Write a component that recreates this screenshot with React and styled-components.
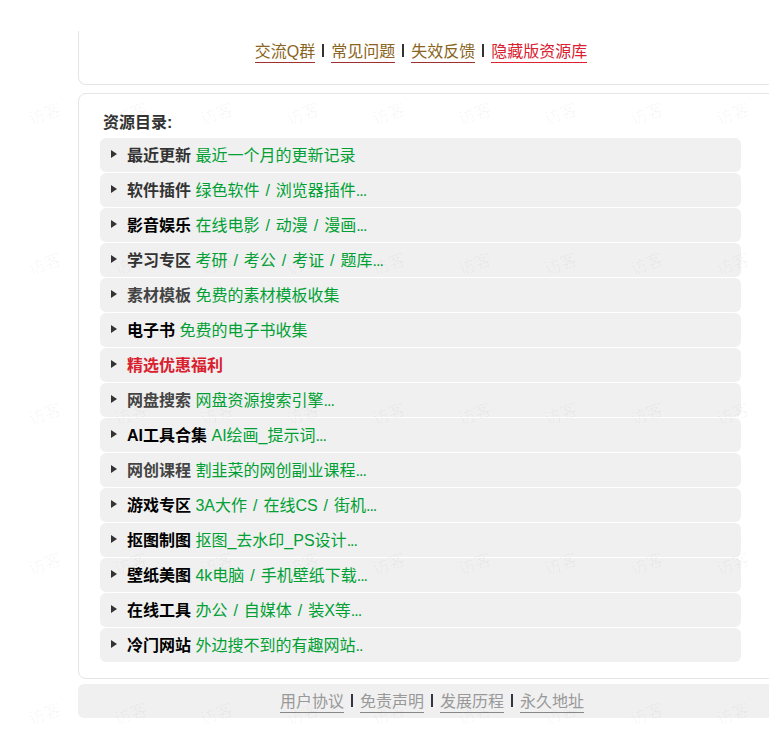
import React from "react";
import styled, { createGlobalStyle } from "styled-components";

const Global = createGlobalStyle`
  html, body { margin: 0; padding: 0; background: #fff; overflow: hidden; }
  body { font-family: "Liberation Sans", "Noto Sans CJK SC", sans-serif; font-size: 16px; color: #333; }
`;

const Page = styled.div`
  position: relative;
  width: 769px;
  height: 738px;
  overflow: hidden;
  padding: 31px 0 0 78px;
  box-sizing: border-box;
`;

const Card = styled.section`
  width: 760px;
  box-sizing: border-box;
  background: #fff;
  border: 1px solid #e5e5e5;
  border-radius: 8px;
`;

const TopCard = styled(Card)`
  height: 54px;
  border-top: 0;
  border-top-left-radius: 0;
  border-top-right-radius: 0;
  padding: 8px 74px 0 0;
  margin-bottom: 8px;
`;

const LinkRow = styled.nav`
  display: flex;
  justify-content: center;
  align-items: center;
  height: 26px;
  line-height: 26px;
`;

const Link = styled.a`
  color: ${(p) => p.$color};
  text-decoration: none;
  border-bottom: 1px solid ${(p) => p.$line};
  line-height: 20px;
`;

const Sep = styled.span`
  display: block;
  width: 2px;
  height: 13px;
  margin: -3px 7px 0;
  background: ${(p) => p.$color};
`;

const MainCard = styled(Card)`
  height: 586px;
  padding: 17px 0 0 21px;
`;

const Heading = styled.h2`
  margin: 0 0 3px 3px;
  height: 24px;
  font-size: 16px;
  line-height: 24px;
  font-weight: 700;
  color: #333;
`;

const List = styled.div`
  display: flex;
  flex-direction: column;
  gap: 1px;
  width: 641px;
`;

const Row = styled.details`
  height: 34px;
  background: #f0f0f0;
  border-radius: 6px;
`;

const Summary = styled.summary`
  display: flex;
  align-items: center;
  height: 34px;
  line-height: 34px;
  padding-left: 11px;
  white-space: pre;
  cursor: pointer;
  list-style: none;

  &::-webkit-details-marker { display: none; }

  &::before {
    content: "";
    flex: none;
    width: 0;
    height: 0;
    margin: -2px 10px 0 0;
    border-style: solid;
    border-width: 4.5px 0 4.5px 6px;
    border-color: transparent transparent transparent #333;
  }
`;

const Label = styled.span`
  display: block;
  margin-top: 2px;
`;

const Title = styled.b`
  font-weight: 700;
  color: ${(p) => p.$color || "#333"};
`;

const Desc = styled.span`
  color: #00a034;
  word-spacing: 1.5px;
`;

const Dots = styled.span`
  letter-spacing: -1px;
`;

const FooterBar = styled.footer`
  width: 760px;
  height: 34px;
  margin-top: 5px;
  padding: 2px 52px 0 0;
  box-sizing: border-box;
  background: #f0f0f0;
  border-radius: 6px;
  display: flex;
  justify-content: center;
  align-items: center;
`;

const Watermarks = styled.div`
  position: absolute;
  inset: 0;
  pointer-events: none;
  display: grid;
  grid-template-columns: repeat(9, 86px);
  grid-auto-rows: 150px;
  padding: 40px 0 0 2px;
  z-index: 5;
`;

const Mark = styled.span`
  display: block;
  text-align: center;
  line-height: 150px;
  height: 150px;
  font-size: 17px;
  color: rgba(0, 0, 0, 0.035);
  transform: rotate(-20deg);
`;

const rows = [
  ["最近更新", "最近一个月的更新记录", "#333"],
  ["软件插件", "绿色软件 / 浏览器插件", "#333", "..."],
  ["影音娱乐", "在线电影 / 动漫 / 漫画", "#000", "..."],
  ["学习专区", "考研 / 考公 / 考证 / 题库", "#333", "..."],
  ["素材模板", "免费的素材模板收集", "#444"],
  ["电子书", "免费的电子书收集", "#000"],
  ["精选优惠福利", "", "#d9202f"],
  ["网盘搜索", "网盘资源搜索引擎", "#444", "..."],
  ["AI工具合集", "AI绘画_提示词", "#000", "..."],
  ["网创课程", "割韭菜的网创副业课程", "#444", "..."],
  ["游戏专区", "3A大作 / 在线CS / 街机", "#000", "..."],
  ["抠图制图", "抠图_去水印_PS设计", "#000", "..."],
  ["壁纸美图", "4k电脑 / 手机壁纸下载", "#000", "..."],
  ["在线工具", "办公 / 自媒体 / 装X等", "#000", "..."],
  ["冷门网站", "外边搜不到的有趣网站", "#000", ".."],
];

export default function App() {
  return (
    <>
      <Global />
      <Page>
        <TopCard>
          <LinkRow>
            <Link $color="#8a6420" $line="#a03030">交流Q群</Link>
            <Sep $color="#333" />
            <Link $color="#8a6420" $line="#a03030">常见问题</Link>
            <Sep $color="#333" />
            <Link $color="#8a6420" $line="#a03030">失效反馈</Link>
            <Sep $color="#333" />
            <Link $color="#d9202f" $line="#e0202f">隐藏版资源库</Link>
          </LinkRow>
        </TopCard>
        <MainCard>
          <Heading>资源目录:</Heading>
          <List>
            {rows.map(([t, d, c, dots]) => (
              <Row key={t}>
                <Summary>
                  <Label>
                    <Title $color={c}>{t}</Title>
                    {d ? " " : ""}
                    {d ? (
                      <Desc>
                        {d}
                        {dots ? <Dots>{dots}</Dots> : null}
                      </Desc>
                    ) : null}
                  </Label>
                </Summary>
              </Row>
            ))}
          </List>
        </MainCard>
        <FooterBar>
          <LinkRow>
            <Link $color="#999" $line="#888">用户协议</Link>
            <Sep $color="#334" />
            <Link $color="#999" $line="#888">免责声明</Link>
            <Sep $color="#334" />
            <Link $color="#999" $line="#888">发展历程</Link>
            <Sep $color="#334" />
            <Link $color="#999" $line="#888">永久地址</Link>
          </LinkRow>
        </FooterBar>
        <Watermarks>
          {Array.from({ length: 45 }, (_, i) => (
            <Mark key={i}>访客</Mark>
          ))}
        </Watermarks>
      </Page>
    </>
  );
}
